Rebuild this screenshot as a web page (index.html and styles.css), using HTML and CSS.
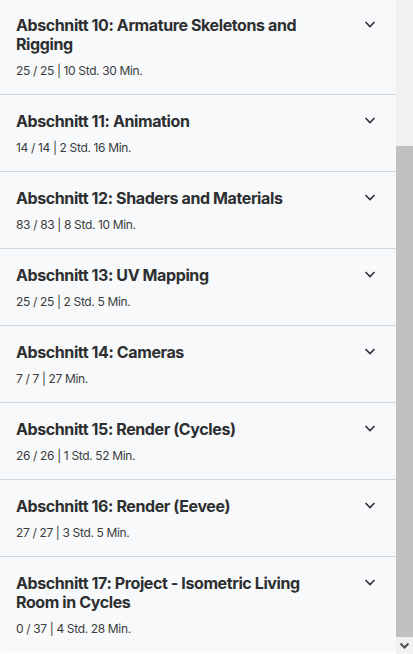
FILE: index.html
```html
<!DOCTYPE html>
<html lang="de">
<head>
<meta charset="utf-8">
<link rel="stylesheet" href="styles.css">
</head>
<body>
<div class="page">
  <div class="list">
    <div class="section">
      <div class="text"><div class="title">Abschnitt 10: Armature Skeletons and Rigging</div><div class="meta">25 / 25 | 10 Std. 30 Min.</div></div>
      <svg class="chev" width="16" height="16" viewBox="0 0 16 16"><path d="M3.5 6 L8 10.5 L12.5 6" fill="none" stroke="#2d2f3b" stroke-width="1.6"/></svg>
    </div>
    <div class="section">
      <div class="text"><div class="title">Abschnitt 11: Animation</div><div class="meta">14 / 14 | 2 Std. 16 Min.</div></div>
      <svg class="chev" width="16" height="16" viewBox="0 0 16 16"><path d="M3.5 6 L8 10.5 L12.5 6" fill="none" stroke="#2d2f3b" stroke-width="1.6"/></svg>
    </div>
    <div class="section">
      <div class="text"><div class="title">Abschnitt 12: Shaders and Materials</div><div class="meta">83 / 83 | 8 Std. 10 Min.</div></div>
      <svg class="chev" width="16" height="16" viewBox="0 0 16 16"><path d="M3.5 6 L8 10.5 L12.5 6" fill="none" stroke="#2d2f3b" stroke-width="1.6"/></svg>
    </div>
    <div class="section">
      <div class="text"><div class="title">Abschnitt 13: UV Mapping</div><div class="meta">25 / 25 | 2 Std. 5 Min.</div></div>
      <svg class="chev" width="16" height="16" viewBox="0 0 16 16"><path d="M3.5 6 L8 10.5 L12.5 6" fill="none" stroke="#2d2f3b" stroke-width="1.6"/></svg>
    </div>
    <div class="section">
      <div class="text"><div class="title">Abschnitt 14: Cameras</div><div class="meta">7 / 7 | 27 Min.</div></div>
      <svg class="chev" width="16" height="16" viewBox="0 0 16 16"><path d="M3.5 6 L8 10.5 L12.5 6" fill="none" stroke="#2d2f3b" stroke-width="1.6"/></svg>
    </div>
    <div class="section">
      <div class="text"><div class="title">Abschnitt 15: Render (Cycles)</div><div class="meta">26 / 26 | 1 Std. 52 Min.</div></div>
      <svg class="chev" width="16" height="16" viewBox="0 0 16 16"><path d="M3.5 6 L8 10.5 L12.5 6" fill="none" stroke="#2d2f3b" stroke-width="1.6"/></svg>
    </div>
    <div class="section">
      <div class="text"><div class="title">Abschnitt 16: Render (Eevee)</div><div class="meta">27 / 27 | 3 Std. 5 Min.</div></div>
      <svg class="chev" width="16" height="16" viewBox="0 0 16 16"><path d="M3.5 6 L8 10.5 L12.5 6" fill="none" stroke="#2d2f3b" stroke-width="1.6"/></svg>
    </div>
    <div class="section last">
      <div class="text"><div class="title">Abschnitt 17: Project - Isometric Living Room in Cycles</div><div class="meta">0 / 37 | 4 Std. 28 Min.</div></div>
      <svg class="chev" width="16" height="16" viewBox="0 0 16 16"><path d="M3.5 6 L8 10.5 L12.5 6" fill="none" stroke="#2d2f3b" stroke-width="1.6"/></svg>
    </div>
  </div>
  <div class="scrollbar">
    <div class="track-top"></div>
    <div class="thumb"></div>
    <div class="arrow"><svg width="17" height="17" viewBox="0 0 17 17"><path d="M4.5 6.5 L8.5 10.5 L12.5 6.5" fill="none" stroke="#505050" stroke-width="2"/></svg></div>
  </div>
</div>
</body>
</html>
```
FILE: styles.css
```css
html, body {
  margin: 0;
  padding: 0;
  background: #ffffff;
}
body {
  font-family: Inter, "Noto Sans", "Liberation Sans", sans-serif;
  color: #2d2f31;
  overflow: hidden;
}
.page {
  display: flex;
  width: 413px;
  height: 654px;
  overflow: hidden;
}
.list {
  width: 396px;
  margin-top: -1px;
  display: flex;
  flex-direction: column;
}
.section {
  display: flex;
  align-items: flex-start;
  gap: 20px;
  padding: 17px 18px 15px 16px;
  background: #f7f9fa;
  border-bottom: 1px solid #d1d7dc;
}
.section.last {
  border-bottom: none;
  border-bottom-left-radius: 4px;
}
.text {
  flex: 1;
  display: flex;
  flex-direction: column;
  gap: 8px;
}
.title {
  font-size: 16px;
  font-weight: 700;
  line-height: 19px;
  letter-spacing: -0.4px;
}
.meta {
  font-size: 12px;
  line-height: 17px;
  letter-spacing: -0.35px;
  color: #3a3c40;
}
.chev {
  flex: none;
}
.scrollbar {
  width: 17px;
  display: flex;
  flex-direction: column;
  background: #f1f1f1;
}
.track-top {
  height: 146px;
}
.thumb {
  flex: 1;
  background: #c1c1c1;
}
.arrow {
  height: 17px;
  display: flex;
  justify-content: center;
  align-items: center;
}
```
